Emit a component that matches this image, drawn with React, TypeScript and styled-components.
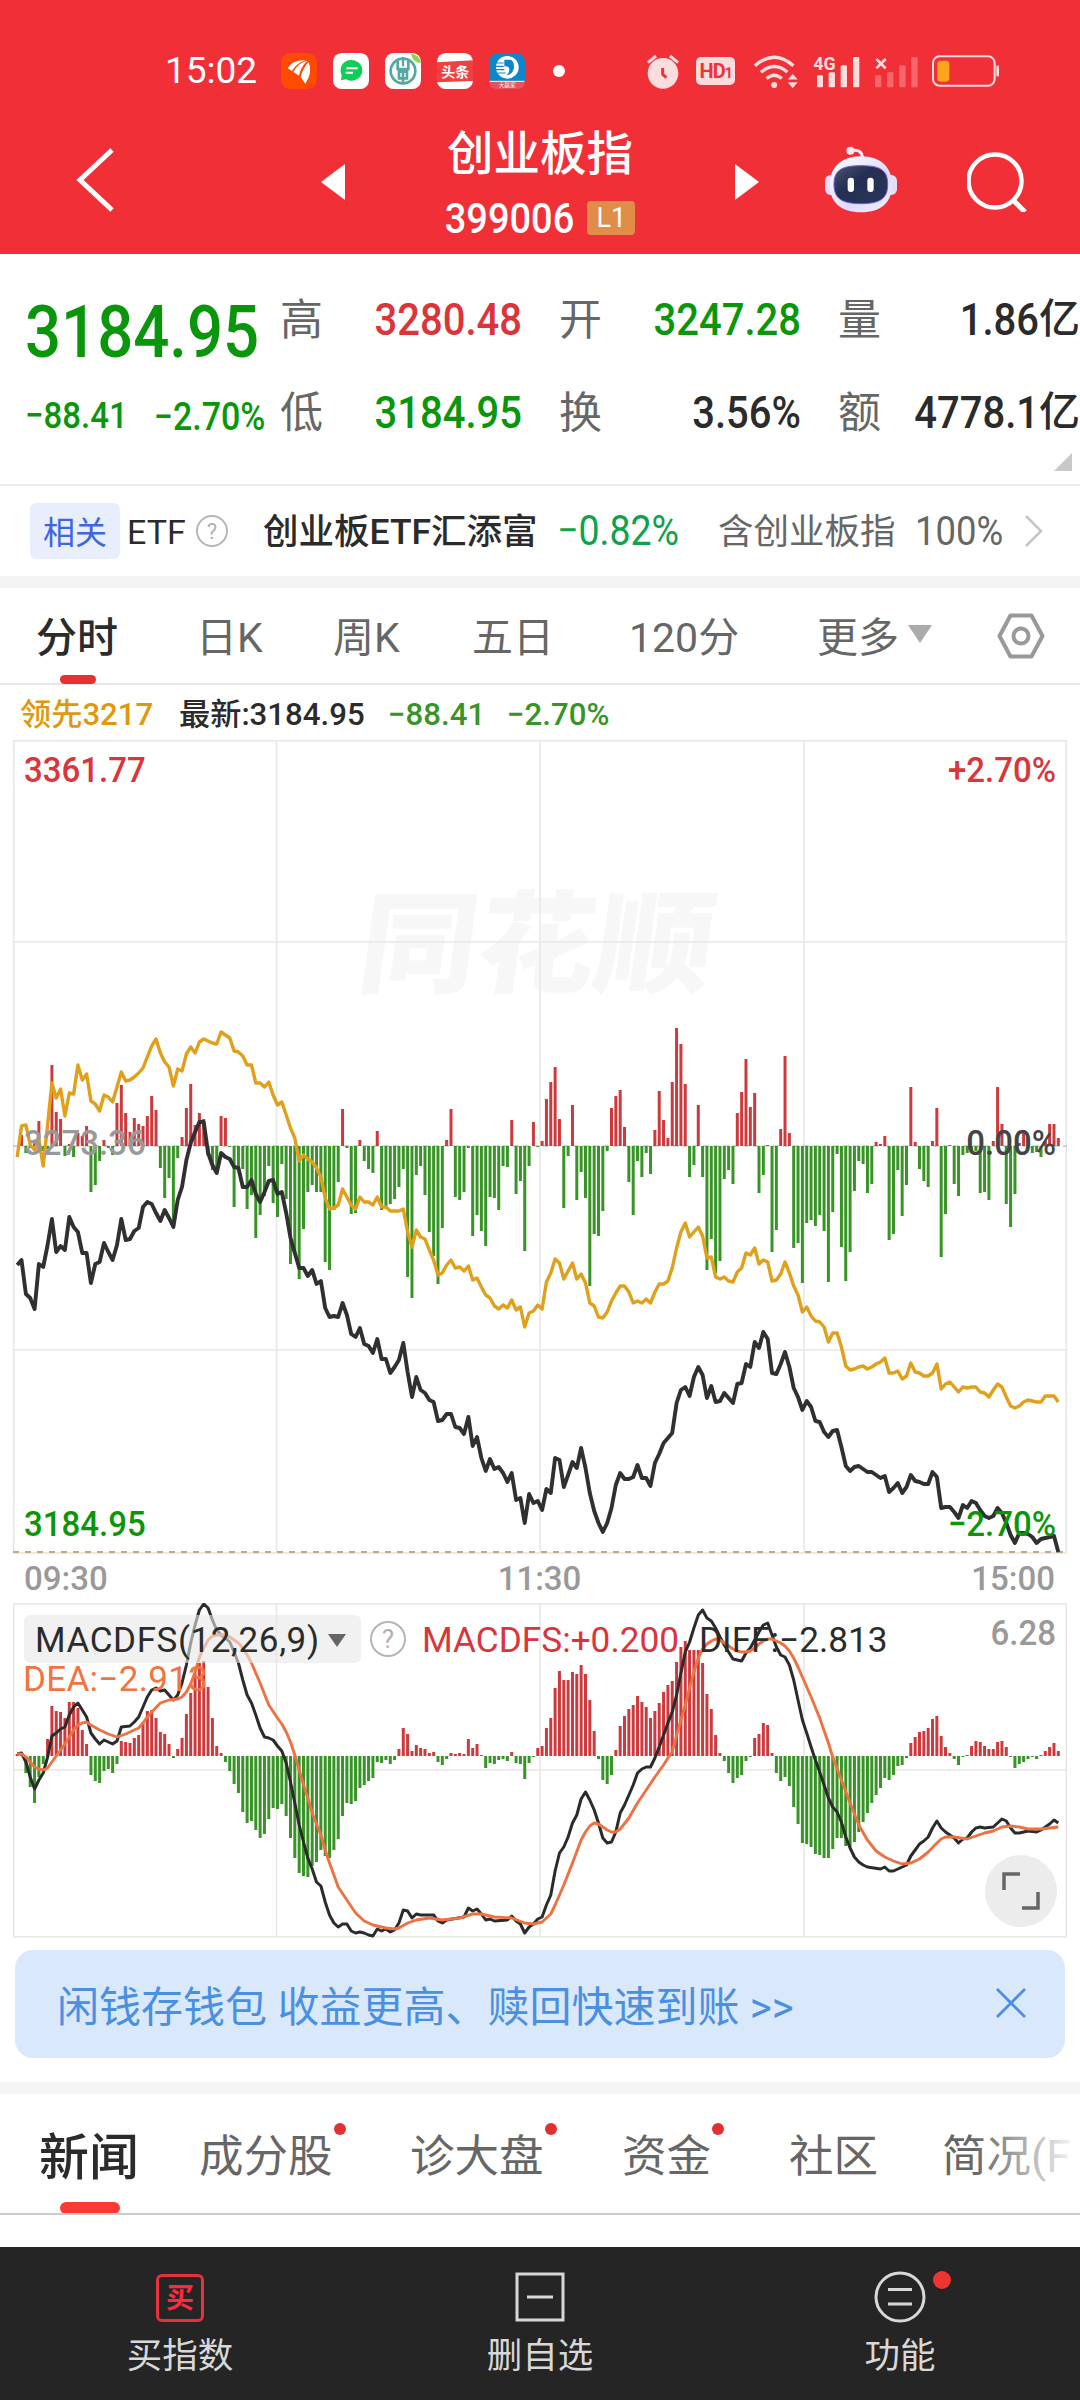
import React from "react";
import styled, { createGlobalStyle } from "styled-components";

const RED = "#d9353a";
const GREEN = "#0a960a";
const DARK = "#2b2b2b";
const GRAY = "#666666";

// minute volume-strength bars, px above (+) or below (-) the zero line
const strength = [
  0, 11, -7, -2, 4, 25, -5, -3, 81, 34, 27, -10, 2, -11, 13, 10, 20, -46, -39, -15, 6, -2, -9, 43, 61, 33, 14, 28, 22, 20,
  30, 50, 36, -22, -52, -32, -79, -12, 9, 38, 62, 21, 33, 27, -10, -24, -26, 30, 28, -1, -61, -21, -23, -63, -49, -92, -69, -50, -20, -57,
  -71, -18, -53, -118, -107, -133, -83, -46, -39, -46, -46, -116, -124, -64, -36, 37, -2, -68, -67, 6, -15, -23, -27, 15, -64, -61, -58, -53, -41, -23,
  -131, -152, -29, -20, -49, -86, -110, -138, -82, 6, 37, -51, -54, -46, -2, -90, -69, -85, -100, -51, -52, -64, -20, -21, 26, -48, -35, -105, -20, 24,
  -1, 5, 47, 64, 79, 27, -62, -10, 41, -54, -26, -52, -140, -88, -90, -65, -5, 38, 50, 56, 19, -36, -69, -15, -31, -7, -28, 16, 55, 26,
  8, 64, 118, 102, 62, -31, -19, 41, -31, -124, -93, -127, -115, -33, -24, -38, 33, 54, 87, 39, 53, -47, -29, 1, -106, -84, 17, 90, 13, -102,
  -97, -137, -77, -74, -80, -69, -85, -136, -66, -8, -101, -135, -106, -45, -15, -18, -47, -38, 4, 2, 10, -94, -88, -24, -70, -39, 59, 4, -23, -35,
  -41, 5, 38, -111, -68, 1, -38, -50, -9, -7, -6, -5, -47, -46, -54, 5, 59, 22, -58, -81, -48, 3, 16, 9, -7, -6, -11, 5, 22, 22, 8,
];

const leadLine = [
  417, 386, 385, 405, 410, 400, 426, 385, 343, 358, 349, 376, 353, 354, 325, 340, 334, 361, 364, 371, 355, 357, 362, 347, 332, 341, 340, 337, 333, 328,
  317, 306, 299, 313, 322, 327, 346, 329, 331, 314, 307, 313, 302, 299, 301, 303, 304, 292, 295, 298, 311, 312, 316, 325, 325, 343, 343, 347, 342, 355,
  365, 362, 375, 388, 398, 421, 415, 419, 422, 428, 437, 458, 469, 468, 465, 449, 457, 465, 469, 457, 462, 462, 465, 457, 467, 467, 471, 471, 471, 469,
  492, 507, 490, 497, 499, 510, 520, 535, 533, 525, 520, 528, 527, 531, 526, 540, 538, 547, 555, 558, 566, 569, 565, 568, 560, 570, 567, 587, 573, 571,
  565, 569, 542, 533, 519, 523, 539, 531, 523, 539, 534, 543, 563, 566, 577, 578, 572, 561, 553, 546, 546, 552, 563, 561, 563, 559, 563, 552, 544, 544,
  541, 528, 508, 492, 483, 497, 492, 487, 496, 518, 517, 537, 539, 537, 541, 542, 532, 528, 513, 515, 508, 524, 520, 522, 541, 540, 534, 522, 533, 546,
  555, 572, 567, 576, 581, 582, 587, 602, 593, 593, 607, 626, 630, 629, 627, 626, 629, 627, 624, 622, 618, 633, 633, 631, 639, 636, 623, 632, 633, 636,
  636, 633, 624, 649, 644, 642, 647, 652, 647, 648, 647, 647, 652, 653, 657, 650, 644, 647, 657, 666, 668, 666, 662, 660, 661, 662, 662, 656, 656, 656, 662,
];

const priceLine = [
  525, 520, 554, 558, 569, 524, 527, 505, 479, 512, 506, 510, 477, 487, 492, 513, 513, 543, 524, 522, 503, 512, 520, 505, 479, 500, 499, 491, 488, 467,
  462, 464, 473, 481, 470, 478, 487, 460, 447, 420, 403, 392, 382, 382, 413, 425, 433, 413, 417, 419, 427, 428, 447, 447, 440, 454, 462, 452, 441, 440,
  454, 452, 473, 498, 513, 528, 528, 536, 530, 544, 541, 568, 577, 576, 577, 563, 575, 594, 597, 588, 604, 606, 613, 599, 619, 619, 633, 627, 620, 603,
  632, 657, 637, 650, 653, 660, 662, 681, 680, 674, 674, 687, 688, 694, 677, 706, 697, 718, 731, 719, 729, 727, 733, 742, 733, 760, 758, 783, 754, 763,
  761, 770, 749, 753, 718, 720, 747, 735, 722, 728, 708, 728, 753, 771, 783, 792, 783, 768, 745, 733, 739, 739, 737, 725, 738, 738, 746, 723, 714, 703,
  698, 693, 663, 650, 647, 656, 637, 627, 635, 658, 646, 662, 661, 653, 658, 663, 644, 643, 624, 627, 602, 608, 592, 599, 633, 634, 624, 612, 627, 648,
  657, 670, 661, 667, 681, 682, 692, 697, 691, 690, 707, 726, 731, 727, 726, 729, 732, 732, 735, 738, 736, 752, 748, 743, 753, 747, 735, 741, 742, 744,
  744, 732, 737, 768, 767, 767, 772, 778, 765, 768, 761, 763, 770, 776, 778, 776, 768, 773, 783, 795, 803, 793, 793, 794, 797, 803, 799, 798, 797, 796, 812,
];

const macdBars = [
  2, 2, -17, -31, -47, -21, -8, 17, 50, 45, 44, 38, 54, 54, 48, 26, 12, -19, -25, -27, -15, -13, -17, -8, 15, 14, 13, 18, 21, 33,
  45, 46, 38, 24, 22, 12, -2, 7, 18, 42, 63, 83, 93, 95, 69, 38, 10, 3, -6, -15, -28, -37, -56, -67, -65, -74, -82, -78, -63, -52,
  -53, -48, -60, -82, -102, -117, -120, -121, -110, -106, -94, -100, -102, -94, -83, -60, -47, -48, -45, -32, -29, -25, -22, -6, -7, -4, -8, -4, 7, 28,
  22, 5, 11, 8, 7, 3, 4, -6, -9, -3, 3, 2, 3, 2, 17, 8, 12, 1, -12, -7, -8, -4, -3, -5, 4, -7, -8, -23, -7, -1,
  8, 10, 28, 38, 68, 85, 76, 76, 84, 82, 91, 82, 56, 25, -3, -24, -28, -19, 6, 30, 40, 47, 51, 60, 54, 49, 38, 45, 53, 64,
  71, 75, 94, 109, 115, 106, 106, 106, 93, 62, 47, 21, 3, -5, -17, -27, -22, -19, -5, -1, 18, 22, 33, 31, 3, -17, -25, -21, -30, -51,
  -68, -87, -88, -91, -98, -99, -102, -102, -93, -82, -82, -90, -91, -86, -76, -66, -57, -47, -39, -32, -22, -24, -19, -10, -9, -2, 13, 19, 24, 25,
  28, 37, 40, 20, 9, 3, -3, -9, -1, 1, 10, 15, 14, 10, 7, 7, 14, 15, 9, -1, -12, -8, -6, -3, -1, -3, 1, 5, 9, 13, 5,
];

// [minute, y]
const diffLine = [
  [0, 151], [1, 150], [2, 159], [3, 174], [4, 186], [5, 177], [6, 170], [7, 154], [8, 133], [9, 130], [10, 126], [11, 124], [12, 112], [13, 104], [14, 100],
  [15, 107], [16, 114], [17, 130], [18, 136], [19, 141], [20, 137], [21, 139], [22, 141], [23, 138], [24, 124], [26, 123], [27, 119], [28, 114], [29, 104],
  [30, 94], [31, 87], [32, 85], [33, 88], [34, 87], [35, 92], [36, 97], [37, 92], [38, 80], [39, 62], [40, 40], [41, 22], [42, 7], [43, 1], [44, 5],
  [45, 17], [46, 27], [47, 32], [48, 35], [49, 39], [50, 49], [51, 60], [52, 77], [53, 92], [54, 100], [55, 112], [56, 125], [57, 134], [58, 135], [59, 137],
  [60, 143], [61, 148], [62, 160], [63, 179], [64, 200], [65, 222], [66, 239], [67, 255], [68, 266], [69, 279], [70, 283], [71, 299], [72, 312], [73, 320],
  [74, 324], [75, 321], [76, 321], [77, 328], [78, 330], [79, 329], [80, 330], [81, 332], [82, 333], [83, 326], [84, 328], [85, 326], [86, 329], [87, 327],
  [88, 320], [89, 307], [90, 308], [91, 315], [92, 311], [93, 312], [96, 312], [97, 318], [98, 320], [99, 317], [103, 314], [104, 305], [105, 308], [106, 306],
  [107, 311], [108, 317], [109, 316], [110, 318], [113, 317], [114, 313], [115, 318], [116, 321], [117, 330], [118, 324], [119, 321], [120, 316], [121, 314],
  [122, 302], [123, 292], [124, 268], [125, 250], [126, 244], [127, 234], [128, 220], [129, 212], [130, 196], [131, 189], [132, 197], [133, 207], [134, 220],
  [135, 235], [136, 240], [137, 239], [138, 229], [139, 210], [140, 202], [141, 192], [142, 182], [143, 170], [144, 166], [145, 164], [146, 164], [147, 155],
  [148, 144], [149, 132], [150, 120], [151, 109], [152, 92], [153, 70], [154, 49], [155, 39], [156, 25], [157, 12], [158, 7], [159, 15], [160, 18], [161, 25],
  [162, 34], [163, 42], [164, 49], [165, 56], [166, 57], [167, 58], [168, 50], [169, 45], [170, 37], [171, 29], [172, 22], [173, 20], [174, 32], [175, 44],
  [176, 52], [177, 54], [178, 62], [179, 77], [180, 97], [181, 117], [182, 130], [183, 144], [184, 157], [185, 169], [186, 182], [187, 195], [188, 204],
  [189, 209], [190, 219], [191, 234], [192, 245], [193, 254], [194, 259], [195, 262], [196, 264], [199, 266], [200, 264], [201, 268], [202, 268], [203, 266],
  [204, 264], [205, 262], [206, 253], [207, 247], [208, 241], [209, 238], [210, 234], [211, 225], [212, 218], [213, 225], [214, 229], [215, 232], [216, 235],
  [217, 240], [218, 236], [219, 235], [220, 229], [221, 225], [222, 224], [223, 225], [225, 224], [226, 220], [227, 216], [228, 218], [229, 225], [230, 230],
  [231, 230], [233, 228], [235, 229], [236, 227], [238, 221], [239, 217], [240, 220],
];

const deaLine = [
  [0, 151], [1, 151], [2, 154], [3, 159], [4, 164], [5, 166], [6, 167], [7, 165], [8, 159], [9, 153], [10, 147], [11, 141], [12, 134], [13, 127], [14, 122],
  [15, 120], [16, 119], [17, 122], [19, 127], [21, 131], [23, 134], [25, 131], [27, 127], [28, 125], [29, 120], [30, 114], [31, 109], [33, 100], [35, 97],
  [37, 96], [38, 94], [39, 89], [40, 81], [41, 69], [42, 54], [43, 45], [44, 37], [45, 33], [46, 32], [48, 32], [49, 34], [50, 37], [51, 40], [52, 45],
  [53, 52], [54, 60], [56, 80], [58, 102], [60, 115], [61, 121], [62, 129], [63, 139], [64, 152], [65, 167], [66, 182], [67, 195], [68, 210], [70, 232],
  [71, 247], [72, 260], [73, 272], [74, 284], [76, 297], [78, 310], [80, 318], [82, 322], [85, 325], [87, 326], [88, 325], [90, 320], [92, 317], [95, 315],
  [98, 317], [102, 315], [105, 311], [107, 311], [110, 314], [114, 315], [117, 320], [119, 321], [121, 319], [122, 315], [123, 311], [124, 302], [126, 282],
  [128, 260], [130, 237], [131, 229], [132, 223], [133, 220], [134, 221], [136, 227], [137, 229], [138, 229], [139, 226], [141, 215], [143, 200], [145, 187],
  [147, 174], [148, 168], [149, 162], [150, 155], [151, 149], [152, 132], [153, 117], [154, 102], [155, 85], [156, 69], [157, 55], [158, 46], [159, 41],
  [160, 38], [161, 36], [162, 37], [163, 40], [165, 46], [166, 48], [167, 49], [168, 49], [169, 48], [170, 45], [171, 41], [172, 38], [173, 36], [174, 36],
  [175, 38], [176, 40], [177, 43], [178, 48], [179, 55], [180, 64], [181, 74], [183, 94], [185, 115], [187, 140], [188, 154], [190, 177], [192, 200],
  [194, 222], [196, 237], [198, 248], [200, 254], [202, 258], [204, 261], [206, 260], [208, 256], [210, 249], [212, 240], [213, 236], [214, 234], [216, 234],
  [219, 236], [221, 233], [223, 230], [225, 228], [227, 224], [229, 223], [231, 224], [233, 226], [236, 226], [238, 225], [240, 224],
];

const minuteX = (i: number) => 4.2 + i * 4.338;
const toPoints = (data: number[]) => data.map((y, i) => `${minuteX(i).toFixed(1)},${y}`).join(" ");
const pairPoints = (data: number[][]) => data.map(([i, y]) => `${minuteX(i).toFixed(1)},${y}`).join(" ");

const Bars = ({ data, zero }: { data: number[]; zero: number }) => (
  <g>
    {data.map((v, i) => (
      <rect
        key={i}
        x={minuteX(i) - 1.5}
        y={v > 0 ? zero - v : zero}
        width={3}
        height={Math.abs(v)}
        fill={v > 0 ? "#cc3a3e" : "#399427"}
      />
    ))}
  </g>
);

const TrendChart = () => (
  <svg width="1054" height="815" viewBox="0 0 1054 815" fill="none">
    <g stroke="#e8e8e8" strokeWidth="1.5">
      <path d="M.75 813V.75h1052.5V813M263.5 0v813M527 0v813M791 0v813M0 202h1054M0 610h1054" />
    </g>
    <path d="M0 406h1054" stroke="#a9a9a9" strokeWidth="1.2" strokeDasharray="6 4" />
    <Bars data={strength} zero={406} />
    <path d="M0 813h1054" stroke="#f3ead9" strokeWidth="2" />
    <path d="M0 812h1054" stroke="#b5ab8f" strokeWidth="1.8" strokeDasharray="6 6" />
    <polyline points={toPoints(leadLine)} stroke="#e0a01c" strokeWidth="3.4" strokeLinejoin="round" />
    <polyline points={toPoints(priceLine)} stroke="#303030" strokeWidth="3.9" strokeLinejoin="round" />
  </svg>
);

const MacdChart = () => (
  <svg width="1054" height="335" viewBox="0 0 1054 335" fill="none">
    <path
      d="M.75.75h1052.5v333H.75zM263.5 0v334M527 0v334M791 0v334M0 167h1054"
      stroke="#e6e6e6"
      strokeWidth="1.5"
    />
    <Bars data={macdBars} zero={153} />
    <polyline points={pairPoints(diffLine)} stroke="#2b2b2b" strokeWidth="3" strokeLinejoin="round" />
    <polyline points={pairPoints(deaLine)} stroke="#ee7142" strokeWidth="2.9" strokeLinejoin="round" />
  </svg>
);

const StatusIcons = () => (
  <>
    <svg width="32" height="35" viewBox="24 40 96 105">
      <circle cx="72" cy="98" r="46" fill="#fddcdd" />
      <path d="M27 66l24-20M117 66L93 46" stroke="#fddcdd" strokeWidth="9" />
      <path d="M71 82v19l11 10" stroke="#ee3239" strokeWidth="9" fill="none" />
    </svg>
    <HdBadge>
      HD<small>1</small>
    </HdBadge>
    <svg width="45" height="35" viewBox="345 38 136 105" fill="none" stroke="#fddcdd" strokeWidth="10">
      <path d="M351 73Q409 22 467 73M369 93Q409 58 449 92M386 112Q409 92 432 112" />
      <circle cx="409" cy="131" r="9" fill="#fddcdd" stroke="none" />
      <path d="M450 115h30l-15-17zM450 123h30l-15 18z" fill="#fddcdd" stroke="none" />
    </svg>
    <svg width="47" height="35" viewBox="521 38 141 105" fill="#fddcdd">
      <rect x="533" y="102" width="18" height="36" rx="3" />
      <rect x="568" y="93" width="19" height="45" rx="3" />
      <rect x="604" y="72" width="19" height="66" rx="3" />
      <rect x="641" y="47" width="19" height="91" rx="3" />
      <text x="522" y="86" fontSize="56" fontWeight="700" fontFamily="Roboto, sans-serif" textLength="67" lengthAdjust="spacingAndGlyphs">4G</text>
    </svg>
    <svg width="44" height="35" viewBox="702 38 132 105" fill="#f6666b">
      <rect x="705" y="102" width="19" height="36" rx="3" />
      <rect x="741" y="93" width="19" height="45" rx="3" />
      <rect x="778" y="72" width="19" height="66" rx="3" />
      <rect x="814" y="47" width="19" height="91" rx="3" />
      <path d="M709 53l28 28M737 53l-28 28" stroke="#fddcdd" strokeWidth="8" />
    </svg>
    <svg width="68" height="32" viewBox="878 43 204 96" fill="none">
      <rect x="881" y="47" width="185" height="88" rx="20" stroke="#fddcdd" strokeWidth="6" />
      <rect x="894" y="60" width="36" height="63" rx="10" fill="#fba51a" />
      <path d="M1075 75v32" stroke="#fddcdd" strokeWidth="8" />
    </svg>
  </>
);

const AppIcons = () => (
  <>
    <svg width="36" height="36" viewBox="0 0 108 108">
      <rect width="108" height="108" rx="28" fill="#ff4a00" />
      <path d="M20 46Q34 20 74 22Q46 30 33 54zM37 57Q50 30 79 23Q59 42 54 68zM59 72Q66 44 83 27Q96 58 73 92z" fill="#fff" />
    </svg>
    <svg width="36" height="36" viewBox="0 0 108 108">
      <rect width="108" height="108" rx="26" fill="#fff" />
      <path d="M54 21a33 31 0 1 1-15 58l-15 3 2-16A31 31 0 0 1 54 21z" fill="#0fce58" />
      <path d="M40 46h34M38 59h22" stroke="#fff" strokeWidth="6" />
    </svg>
    <svg width="36" height="36" viewBox="0 0 108 108" fill="none">
      <rect width="108" height="108" rx="26" fill="#fff" />
      <path d="M78 2q26 2 30 28q-24 0-30-28z" fill="#8bd450" />
      <circle cx="54" cy="54" r="37" stroke="#54a8a0" strokeWidth="8" />
      <path d="M54 46v48M38 20v28h32V20M42 56h24v20H42z" stroke="#54a8a0" strokeWidth="8" />
      <path d="M54 12v28" stroke="#54a8a0" strokeWidth="7" />
    </svg>
    <svg width="36" height="36" viewBox="0 0 108 108">
      <rect width="108" height="108" rx="26" fill="#fff" />
      <path d="M0 28l108-6v62L0 88z" fill="#f04142" />
      <text x="13" y="71" fontSize="42" fontWeight="700" fill="#fff" fontFamily='"Noto Sans CJK SC", sans-serif'>头条</text>
    </svg>
    <svg width="36" height="36" viewBox="0 0 108 108">
      <rect width="108" height="108" rx="26" fill="#0e86c8" />
      <path d="M0 86h108q0 22-26 22H26Q0 108 0 86z" fill="#e8515a" />
      <circle cx="55" cy="43" r="34" fill="#fff" />
      <path d="M46 20h20q12 10 8 28-4 16-22 20 12-12 8-24-4-6-14-4z" fill="#0e86c8" />
      <path d="M20 30h24M18 40h26M20 50h26M26 60h24" stroke="#0e86c8" strokeWidth="3.5" />
      <path d="M2 85h104" stroke="#fff" strokeWidth="3" />
      <text x="29" y="103" fontSize="17" fill="#fff" fontFamily='"Noto Sans CJK SC", sans-serif'>大赢家</text>
    </svg>
  </>
);

const Robot = () => (
  <svg width="72" height="68" viewBox="0 0 216 204">
    <defs>
      <linearGradient id="shell" x1="0" y1="0" x2="1" y2="1">
        <stop offset="0" stopColor="#ffffff" />
        <stop offset=".6" stopColor="#dcdcff" />
        <stop offset="1" stopColor="#f0f0ff" />
      </linearGradient>
      <linearGradient id="visor" x1="0" y1="0" x2="1" y2="1">
        <stop offset="0" stopColor="#49566f" />
        <stop offset=".4" stopColor="#242f52" />
        <stop offset="1" stopColor="#29365c" />
      </linearGradient>
    </defs>
    <path d="M78 17q34-6 34 22" stroke="#f3ecfb" strokeWidth="9" fill="none" />
    <circle cx="76" cy="17" r="12" fill="#fbe4ee" />
    <rect x="0" y="90" width="36" height="60" rx="17" fill="#e6ddfa" />
    <rect x="180" y="90" width="36" height="60" rx="17" fill="#e6ddfa" />
    <path d="M108 34c60 0 93 34 93 86s-33 82-93 82-94-30-94-82 34-86 94-86z" fill="url(#shell)" />
    <path d="M108 62c56 0 80 12 80 56s-24 58-80 58-81-14-81-58 25-56 81-56z" fill="url(#visor)" stroke="#7359cc" strokeWidth="3" />
    <rect x="68" y="98" width="19" height="43" rx="9" fill="#fff" />
    <rect x="127" y="98" width="19" height="43" rx="9" fill="#fff" />
  </svg>
);

const quotes = [
  [{ label: "高", value: "3280.48", color: RED }, { label: "低", value: "3184.95", color: GREEN }],
  [{ label: "开", value: "3247.28", color: GREEN }, { label: "换", value: "3.56%", color: DARK }],
  [{ label: "量", value: "1.86", unit: "亿", color: DARK }, { label: "额", value: "4778.1", unit: "亿", color: DARK }],
];

const periods = ["分时", "日K", "周K", "五日", "120分"];

const newsTabs = [
  { name: "新闻" },
  { name: "成分股", dot: true },
  { name: "诊大盘", dot: true },
  { name: "资金", dot: true },
  { name: "社区" },
  { name: "简况(F" },
];

const GlobalStyle = createGlobalStyle`
  * {
    box-sizing: border-box;
  }
  body {
    margin: 0;
    background: #ffffff;
    font-family: Roboto, "Noto Sans CJK SC", sans-serif;
  }
  svg {
    display: block;
    flex-shrink: 0;
  }
`;

const Page = styled.div`
  width: 1080px;
  height: 2400px;
  display: flex;
  flex-direction: column;
  overflow: hidden;
  background: #ffffff;
  color: ${DARK};
  white-space: nowrap;
`;

const Num = styled.span<{ $size: number; $color?: string; $weight?: number }>`
  display: inline-block;
  font-size: ${({ $size }) => $size}px;
  font-weight: ${({ $weight }) => $weight || 500};
  line-height: 1;
  color: ${({ $color }) => $color || "inherit"};
  transform: scaleY(1.13);
`;

const Header = styled.header`
  height: 254px;
  background: #f12f37;
  color: #ffffff;
`;

const StatusBar = styled.div`
  display: flex;
  align-items: center;
  height: 110px;
  padding: 32px 80px 0 165px;
`;

const Time = styled.div`
  width: 116px;
  font-size: 37px;
  line-height: 40px;
`;

const IconGroup = styled.div`
  display: flex;
  align-items: center;
  gap: 16px;
`;

const Dot = styled.i`
  width: 12px;
  height: 12px;
  margin-left: 28px;
  border-radius: 50%;
  background: #ffffff;
`;

const StatusRight = styled.div`
  display: flex;
  align-items: center;
  justify-content: space-between;
  width: 353px;
  margin-left: auto;
`;

const HdBadge = styled.span`
  display: flex;
  justify-content: center;
  align-items: baseline;
  width: 39px;
  height: 28px;
  margin-left: 3px;
  margin-right: 4px;
  border-radius: 5px;
  background: #fddcdd;
  color: #ee3239;
  font-size: 20px;
  font-weight: 700;
  line-height: 29px;
  letter-spacing: -1px;

  small {
    font-size: 14px;
  }
`;

const TitleBar = styled.div`
  display: grid;
  grid-template-columns: 245px 24px 390px 24px 66px 142px 60px;
  grid-template-rows: 144px;
  align-items: center;
  padding-left: 76px;

  > svg:first-child {
    margin-top: -4px;
  }
`;

const TitleText = styled.div`
  display: flex;
  flex-direction: column;
  align-items: center;
`;

const Title = styled.div`
  margin-top: 1px;
  font-size: 46.5px;
  font-weight: 500;
  line-height: 54px;
`;

const CodeRow = styled.div`
  display: flex;
  align-items: center;
  gap: 13px;
  height: 40px;
  margin-top: 17px;
`;

const Level = styled.span`
  width: 48px;
  height: 34px;
  border-radius: 4px;
  background: #e18d4a;
  font-size: 27px;
  line-height: 34px;
  text-align: center;
`;

const RobotWrap = styled.div`
  grid-column: 6;
  margin-top: -6px;
`;

const Quote = styled.section`
  position: relative;
  display: flex;
  gap: 38px;
  height: 232px;
  border-bottom: 2px solid #ececec;
`;

const LastBox = styled.div`
  width: 280px;
  margin-right: -38px;
  padding: 47px 0 0 25px;
`;

const ChangeRow = styled.div`
  display: flex;
  align-items: center;
  gap: 26px;
  margin-top: 34px;
`;

const QuoteCol = styled.div`
  width: 241px;
  padding-top: 18px;
`;

const QuoteItem = styled.div`
  display: flex;
  align-items: center;
  justify-content: space-between;
  height: 93px;
`;

const QuoteLabel = styled.span`
  padding-top: 2px;
  font-size: 43px;
  line-height: 50px;
  color: ${GRAY};
`;

const QuoteValue = styled.span`
  margin-right: -1px;
  font-size: 41px;
  font-weight: 500;
  line-height: 50px;
`;

// small fold mark in the lower right corner
const Corner = styled.i`
  position: absolute;
  right: 8px;
  bottom: 13px;
  border-bottom: 18px solid #c8c8c8;
  border-left: 18px solid transparent;
`;

const EtfRow = styled.section`
  display: grid;
  grid-template-columns: 97px 69px 67px 294px 161px 197px 109px 20px;
  align-items: center;
  height: 90px;
  padding-left: 30px;
`;

const Tag = styled.span`
  width: 90px;
  height: 56px;
  border-radius: 6px;
  background: #e8eefc;
  color: #3d66e0;
  font-size: 32px;
  line-height: 60px;
  text-align: center;
`;

const EtfText = styled.span<{ $color: string; $bold?: boolean; $size?: number }>`
  padding-top: 2px;
  font-size: ${({ $size }) => $size || 35.5}px;
  font-weight: ${({ $bold }) => ($bold ? 500 : 400)};
  line-height: 50px;
  color: ${({ $color }) => $color};
`;

const Help = styled.span<{ $big?: boolean }>`
  width: ${({ $big }) => ($big ? 36 : 32)}px;
  height: ${({ $big }) => ($big ? 36 : 32)}px;
  border: 2px solid #b5b5b5;
  border-radius: 50%;
  color: #b0b0b0;
  font-size: ${({ $big }) => ($big ? 26 : 22)}px;
  line-height: ${({ $big }) => ($big ? 33 : 29)}px;
  text-align: center;
`;

const Gap = styled.div`
  height: 12px;
  background: #f4f4f4;
`;

const PeriodRow = styled.nav`
  display: grid;
  grid-template-columns: 160px 137px 139px 157px 188px 180px 48px;
  align-items: center;
  height: 97px;
  padding-left: 36px;
  border-bottom: 2px solid #e8e8e8;
`;

const Period = styled.div<{ $on?: boolean }>`
  position: relative;
  display: flex;
  align-items: center;
  gap: 9px;
  height: 95px;
  padding-bottom: 3px;
  font-size: 41px;
  font-weight: ${({ $on }) => ($on ? 500 : 400)};
  color: ${({ $on }) => ($on ? DARK : GRAY)};

  &::after {
    content: "";
    display: ${({ $on }) => ($on ? "block" : "none")};
    position: absolute;
    left: 24px;
    bottom: -1px;
    width: 36px;
    height: 9px;
    border-radius: 5px;
    background: #e93030;
  }
`;

const Caret = styled.i<{ $dark?: boolean }>`
  border-left: ${({ $dark }) => ($dark ? 9 : 12)}px solid transparent;
  border-right: ${({ $dark }) => ($dark ? 9 : 12)}px solid transparent;
  border-top: ${({ $dark }) => ($dark ? 13 : 18)}px solid ${({ $dark }) => ($dark ? "#666" : "#aaa")};
`;

const Legend = styled.div`
  display: grid;
  grid-template-columns: 159px 209px 119px auto;
  align-items: center;
  height: 55px;
  padding: 5px 0 0 20px;
`;

const LegendItem = styled.span<{ $color: string }>`
  font-size: 31.2px;
  font-weight: 500;
  line-height: 40px;
  color: ${({ $color }) => $color};
`;

const TrendBox = styled.div`
  position: relative;
  width: 1054px;
  height: 815px;
  margin-left: 13px;
`;

const Layer = styled.div`
  position: relative;
`;

const Watermark = styled.div`
  position: absolute;
  left: 347px;
  top: 141px;
  font-size: 118px;
  font-weight: 900;
  line-height: 130px;
  color: #f7f7f7;
  transform: skewX(-8deg) scaleY(0.94);
`;

const AxisLabel = styled.div<{ $top: number; $color: string; $right?: boolean }>`
  position: absolute;
  top: ${({ $top }) => $top}px;
  ${({ $right }) => ($right ? "right: 11px;" : "left: 11px;")}
  font-size: 33px;
  font-weight: 500;
  line-height: 40px;
  color: ${({ $color }) => $color};
  transform: scaleY(1.08);
`;

const TimeAxis = styled.div`
  display: flex;
  justify-content: space-between;
  height: 48px;
  padding: 4px 25px 0 24px;
  color: #999999;
  font-size: 33px;
  font-weight: 500;
  line-height: 40px;
`;

const MacdBox = styled.div`
  position: relative;
  width: 1054px;
  height: 347px;
  margin-left: 13px;
`;

const MacdHead = styled.div`
  position: absolute;
  left: 11px;
  top: 11px;
  display: grid;
  grid-template-columns: 346px 52px 277px auto;
  align-items: center;
`;

const MacdPick = styled.div`
  display: flex;
  align-items: center;
  gap: 8px;
  width: 337px;
  height: 48px;
  padding: 3px 0 0 11px;
  border-radius: 6px;
  background: rgba(232, 232, 232, 0.6);
  font-size: 35px;
  line-height: 50px;
  letter-spacing: 0.6px;
`;

const MacdText = styled.div<{ $color: string }>`
  padding-top: 2px;
  font-size: 35.200px;
  line-height: 48px;
  color: ${({ $color }) => $color};
`;

const Dea = styled.div`
  position: absolute;
  left: 10px;
  top: 57px;
  font-size: 35px;
  line-height: 40px;
  letter-spacing: 0.3px;
  color: #f0743f;
`;

const FullScreen = styled.div`
  position: absolute;
  right: 10px;
  top: 252px;
  display: flex;
  align-items: center;
  justify-content: center;
  width: 72px;
  height: 72px;
  border-radius: 50%;
  background: #ececec;
`;

const Banner = styled.div`
  display: flex;
  align-items: center;
  justify-content: space-between;
  height: 108px;
  margin: 0 15px 24px;
  padding: 0 38px 2px 42px;
  border-radius: 18px;
  background: #dae8fb;
  color: #4a90e2;
  font-size: 42px;
`;

const NewsRow = styled.nav`
  position: relative;
  display: grid;
  grid-template-columns: 160px 211px 212px 167px 153px 138px;
  height: 121px;
  padding-left: 39px;
  overflow: hidden;
  border-bottom: 2px solid #cccccc;
`;

const NewsTab = styled.div<{ $on?: boolean }>`
  position: relative;
  justify-self: start;
  height: 119px;
  font-size: ${({ $on }) => ($on ? 50 : 44.5)}px;
  font-weight: ${({ $on }) => ($on ? 500 : 400)};
  line-height: ${({ $on }) => ($on ? 129 : 126)}px;
  color: ${({ $on }) => ($on ? DARK : GRAY)};

  &::after {
    content: "";
    display: ${({ $on }) => ($on ? "block" : "none")};
    position: absolute;
    left: 21px;
    bottom: -1px;
    width: 60px;
    height: 12px;
    border-radius: 6px;
    background: #fb3a34;
  }
`;

const TabDot = styled.i`
  position: absolute;
  right: -13px;
  top: 29px;
  width: 12px;
  height: 12px;
  border-radius: 50%;
  background: #e03030;
`;

const Fade = styled.div`
  position: absolute;
  right: 0;
  top: 0;
  width: 106px;
  height: 119px;
  background: linear-gradient(to right, rgba(255, 255, 255, 0), #ffffff);
`;

const BottomNav = styled.footer`
  display: grid;
  grid-template-columns: repeat(3, 1fr);
  height: 153px;
  margin-top: auto;
  background: #252525;
`;

const NavItem = styled.div`
  position: relative;
  display: flex;
  flex-direction: column;
  align-items: center;
  gap: 12px;
  padding-top: 24px;
  color: #d8d8d8;
  font-size: 35.5px;
  line-height: 42px;
`;

const BuyIcon = styled.span`
  width: 48px;
  height: 48px;
  margin: 3px 0 1px;
  border: 3px solid #e5323c;
  border-radius: 6px;
  color: #fb2c40;
  font-size: 28px;
  font-weight: 700;
  line-height: 44px;
  text-align: center;
`;

const NavDot = styled.i`
  position: absolute;
  left: 213px;
  top: 24px;
  width: 18px;
  height: 18px;
  border-radius: 50%;
  background: #ee3331;
`;

const App = () => {
  return (
    <Page>
      <GlobalStyle />
      <Header>
        <StatusBar>
          <Time>15:02</Time>
          <IconGroup>
            <AppIcons />
          </IconGroup>
          <Dot />
          <StatusRight>
            <StatusIcons />
          </StatusRight>
        </StatusBar>
        <TitleBar>
          <svg width="40" height="66" viewBox="0 0 40 66" fill="none">
            <path d="M36 3L4 33l32 30" stroke="#fff" strokeWidth="5" />
          </svg>
          <svg width="24" height="36" viewBox="0 0 24 36">
            <path d="M24 0v36L0 18z" fill="#fff" />
          </svg>
          <TitleText>
            <Title>创业板指</Title>
            <CodeRow>
              <Num $size={38}>399006</Num>
              <Level>L1</Level>
            </CodeRow>
          </TitleText>
          <svg width="24" height="36" viewBox="0 0 24 36">
            <path d="M0 0v36l24-18z" fill="#fff" />
          </svg>
          <RobotWrap>
            <Robot />
          </RobotWrap>
          <svg width="60" height="60" viewBox="0 0 60 60" fill="none" stroke="#fff" strokeWidth="4.5">
            <circle cx="28" cy="29" r="26.5" />
            <path d="M46 48l12 12" strokeWidth="5" />
          </svg>
        </TitleBar>
      </Header>

      <Quote>
        <LastBox>
          <Num $size={63.5} $color={GREEN}>3184.95</Num>
          <ChangeRow>
            <Num $size={33} $color={GREEN}>−88.41</Num>
            <Num $size={34} $color={GREEN}>−2.70%</Num>
          </ChangeRow>
        </LastBox>
        {quotes.map((col, c) => (
          <QuoteCol key={c}>
            {col.map((q) => (
              <QuoteItem key={q.label}>
                <QuoteLabel>{q.label}</QuoteLabel>
                <QuoteValue>
                  <Num $size={40} $color={q.color}>{q.value}</Num>
                  {q.unit}
                </QuoteValue>
              </QuoteItem>
            ))}
          </QuoteCol>
        ))}
        <Corner />
      </Quote>

      <EtfRow>
        <Tag>相关</Tag>
        <EtfText $color={DARK} $size={34}>ETF</EtfText>
        <Help>?</Help>
        <EtfText $color={DARK} $bold>创业板ETF汇添富</EtfText>
        <Num $size={37.5} $weight={400} $color="#0fa14c">−0.82%</Num>
        <EtfText $color={GRAY}>含创业板指</EtfText>
        <Num $size={36.5} $weight={400} $color={GRAY}>100%</Num>
        <svg width="20" height="34" viewBox="0 0 20 34" fill="none">
          <path d="M2 2l15 15L2 32" stroke="#c6c6c6" strokeWidth="2.6" />
        </svg>
      </EtfRow>
      <Gap />

      <PeriodRow>
        {periods.map((name, i) => (
          <Period key={name} $on={i === 0}>
            {name}
          </Period>
        ))}
        <Period>
          更多
          <Caret />
        </Period>
        <svg width="48" height="46" viewBox="0 0 48 46" fill="none" stroke="#999" strokeWidth="4">
          <path d="M13.5 2.5h21L45.5 23l-11 20.5h-21L2.5 23z" strokeLinejoin="round" />
          <circle cx="24" cy="23" r="7.5" />
        </svg>
      </PeriodRow>

      <Legend>
        <LegendItem $color="#e0980e">领先3217</LegendItem>
        <LegendItem $color={DARK}>最新:3184.95</LegendItem>
        <LegendItem $color="#399427">−88.41</LegendItem>
        <LegendItem $color="#399427">−2.70%</LegendItem>
      </Legend>

      <TrendBox>
        <Watermark>同花顺</Watermark>
        <Layer>
          <TrendChart />
        </Layer>
        <AxisLabel $top={10} $color={RED}>3361.77</AxisLabel>
        <AxisLabel $top={10} $color={RED} $right>+2.70%</AxisLabel>
        <AxisLabel $top={383} $color="#999999">3273.36</AxisLabel>
        <AxisLabel $top={383} $color="#444444" $right>0.00%</AxisLabel>
        <AxisLabel $top={764} $color={GREEN}>3184.95</AxisLabel>
        <AxisLabel $top={764} $color={GREEN} $right>−2.70%</AxisLabel>
      </TrendBox>
      <TimeAxis>
        <span>09:30</span>
        <span>11:30</span>
        <span>15:00</span>
      </TimeAxis>

      <MacdBox>
        <Layer>
          <MacdChart />
        </Layer>
        <MacdHead>
          <MacdPick>
            MACDFS(12,26,9)
            <Caret $dark />
          </MacdPick>
          <Help $big>?</Help>
          <MacdText $color={RED}>MACDFS:+0.200</MacdText>
          <MacdText $color={DARK}>DIFF:−2.813</MacdText>
        </MacdHead>
        <Dea>DEA:−2.913</Dea>
        <AxisLabel $top={10} $color="#999999" $right>6.28</AxisLabel>
        <FullScreen>
          <svg width="38" height="38" viewBox="0 0 38 38" fill="none" stroke="#666" strokeWidth="3.5">
            <path d="M2 18V2h16M20 36h16V20" />
          </svg>
        </FullScreen>
      </MacdBox>

      <Banner>
        <span>闲钱存钱包 收益更高、赎回快速到账 &gt;&gt;</span>
        <svg width="32" height="32" viewBox="0 0 32 32" fill="none">
          <path d="M2 2l28 28M30 2L2 30" stroke="#4a90e2" strokeWidth="2.8" />
        </svg>
      </Banner>
      <Gap />

      <NewsRow>
        {newsTabs.map((tab, i) => (
          <NewsTab key={tab.name} $on={i === 0}>
            {tab.name}
            {tab.dot && <TabDot />}
          </NewsTab>
        ))}
        <Fade />
      </NewsRow>

      <BottomNav>
        <NavItem>
          <BuyIcon>买</BuyIcon>
          买指数
        </NavItem>
        <NavItem>
          <svg width="52" height="52" viewBox="0 0 52 52" fill="none" stroke="#d8d8d8" strokeWidth="3">
            <path d="M3 3h46v46H3zM13 26h26" />
          </svg>
          删自选
        </NavItem>
        <NavItem>
          <svg width="52" height="52" viewBox="0 0 52 52" fill="none" stroke="#d8d8d8" strokeWidth="3">
            <circle cx="26" cy="26" r="24" />
            <path d="M14 18.5h24M14 33h24" />
          </svg>
          功能
          <NavDot />
        </NavItem>
      </BottomNav>
    </Page>
  );
};

export default App;
